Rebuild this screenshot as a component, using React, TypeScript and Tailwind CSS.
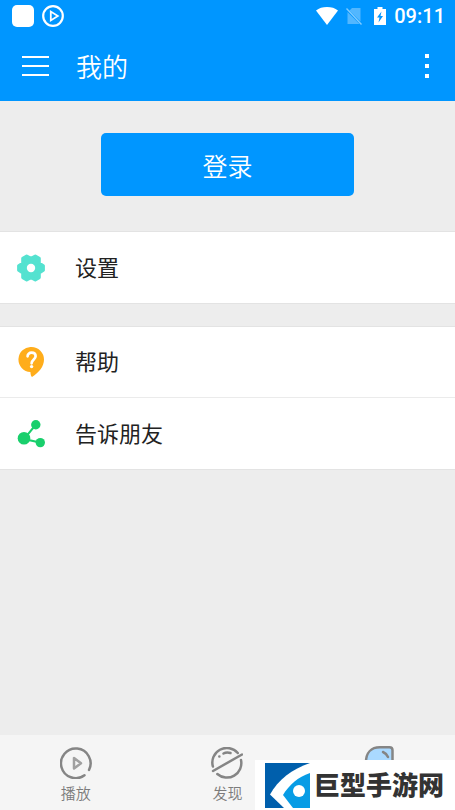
import React from 'react';

const StatusBar: React.FC = () => (
  <div className="flex h-[31px] items-center justify-between pl-3 pr-2.5">
    <div className="flex items-center gap-2">
      <span className="size-[22px] rounded-[5px] bg-white" />
      <svg className="size-[22px]" viewBox="0 0 22 22" fill="none" stroke="#fff" strokeWidth="2.2">
        <circle cx="11" cy="11" r="9.8" />
        <path d="M8.8 6.6v8.8l7-4.4z" strokeWidth="1.8" />
      </svg>
    </div>
    <div className="flex items-center">
      <svg className="h-[18px] w-[22px]" viewBox="0 0 22 18" fill="#fff">
        <path d="M11 18 0 3.4C3 1.200 6.600 0 11 0s8 1.200 11 3.400z" />
      </svg>
      <svg className="ml-2 h-[18px] w-4" viewBox="0 0 16 18">
        <path d="M6 1h8.500v13.500L3.500 3.500zM1.500 5l12 12h-12z" fill="#fff" fillOpacity=".32" />
        <path d="M.5 1.500 15.500 17.500" stroke="#fff" strokeOpacity=".5" strokeWidth="1.300" />
      </svg>
      <svg className="ml-3 h-[18px] w-3" viewBox="0 0 12 18">
        <path d="M3.500 0h5v2H12v16H0V2h3.500z" fill="#fff" />
        <path d="M7.500 4.500 3 10.500h2.500L4.500 15.500 9 9H6.500z" fill="#0096ff" />
      </svg>
      <span className="ml-2 font-['Roboto',sans-serif] text-xl leading-6 font-medium">09:11</span>
    </div>
  </div>
);

const AppBar: React.FC = () => (
  <div className="flex h-[70px] items-center pl-[22px] pr-[26px]">
    <button aria-label="菜单" className="flex w-[27px] flex-col gap-[7px]">
      <span className="h-0.5 w-full bg-white" />
      <span className="h-0.5 w-full bg-white" />
      <span className="h-0.5 w-full bg-white" />
    </button>
    <h1 className="ml-[27px] text-[26px] leading-8 font-[350]">我的</h1>
    <button aria-label="更多" className="ml-auto flex flex-col gap-1.5">
      <span className="size-1 bg-white" />
      <span className="size-1 bg-white" />
      <span className="size-1 bg-white" />
    </button>
  </div>
);

const GearIcon: React.FC = () => (
  <svg className="h-7 w-7" viewBox="-14 -14 28 28">
    <path
      d="M12.300-2.200V2.200L8.200 4.800L8.200 9.500L4.300 11.800L0 9.500L-4.300 11.800L-8.200 9.500L-8.200 4.800L-12.300 2.200V-2.200L-8.200-4.800L-8.200-9.500L-4.300-11.800L0-9.500L4.300-11.800L8.200-9.500L8.200-4.800z"
      fill="#54e2d0"
      stroke="#54e2d0"
      strokeWidth="3.200"
      strokeLinejoin="round"
    />
    <circle r="4.200" fill="#fff" />
  </svg>
);

const HelpIcon: React.FC = () => (
  <svg className="h-[30px] w-7" viewBox="0 0 28 30">
    <path d="M14.500 0a12.500 12.500 0 0 1 12.500 12.500c0 7-5 13-12 17.500-1-.6-1.400-2.700-1.600-5A12.500 12.500 0 0 1 14.500 0z" fill="#ffad1b" />
    <path d="M10.600 9.300c0-2.200 1.700-3.600 4-3.600s4 1.400 4 3.600c0 3-4 3.300-4 7" fill="none" stroke="#fff" strokeWidth="2.700" strokeLinecap="round" />
    <circle cx="14.600" cy="19.600" r="1.700" fill="#fff" />
  </svg>
);

const ShareIcon: React.FC = () => (
  <svg className="h-7 w-7" viewBox="0 0 28 28" fill="#19cf6c">
    <path d="M18.500 5 7 19 23 22.500" fill="none" stroke="#19cf6c" strokeWidth="2" />
    <circle cx="18.800" cy="4.800" r="4.700" />
    <circle cx="7" cy="18.300" r="6.300" />
    <circle cx="23.300" cy="22.600" r="4.700" />
  </svg>
);

const PlayIcon: React.FC = () => (
  <svg className="size-8" viewBox="0 0 32 32" fill="none" stroke="#858585" strokeLinecap="round" strokeLinejoin="round">
    <path d="M24.500 28.300A14.800 14.800 0 1 1 29 23" strokeWidth="2.500" />
    <path d="M14 11v10.500l7-5.250z" stroke="#a0a0a0" strokeWidth="2.500" />
  </svg>
);

const DiscoverIcon: React.FC = () => (
  <svg className="size-8" viewBox="0 0 32 32" fill="none" stroke="#858585" strokeWidth="2.500" strokeLinecap="round">
    <path d="M1.900 19.500A14.500 14.500 0 0 1 26.800 6M30 13A14.500 14.500 0 0 1 6.300 27" />
    <path d="M2 24 31 7.500" />
    <path d="M12.500 6.500c2-1.200 4.500-1.400 7-.5M8.300 9.400h.1" />
  </svg>
);

const MineIcon: React.FC = () => (
  <svg className="size-8" viewBox="0 0 32 32" fill="none" stroke="#858585" strokeWidth="2.500" strokeLinecap="round">
    <path d="M3 16C3 7 8 1.300 17 1.300h9.500q3 0 3 3V16a13.250 13.250 0 0 1-26.500 0z" fill="#aad9ff" />
    <path d="M20 6q3.500 1.500 5 5" />
  </svg>
);

const menuGroups = [
  [{ label: '设置', icon: <GearIcon /> }],
  [
    { label: '帮助', icon: <HelpIcon /> },
    { label: '告诉朋友', icon: <ShareIcon /> },
  ],
];

const SiteBadge: React.FC = () => (
  <div className="absolute right-0 bottom-0 flex h-[50px] w-[200px] items-center bg-white pl-2.5">
    <svg className="size-[45px] shrink-0" viewBox="0 0 45 45">
      <path d="M0 0h45v45H0z" fill="#005fac" />
      <path d="M45 0v45H19L5 31.500C13 17 27 6 45 0z" fill="#fff" />
      <path d="M45 10v35H28L18 32C24 22 33 14 45 10z" fill="#079ce5" />
      <circle cx="34" cy="28" r="6" fill="#fff" />
    </svg>
    <span className="ml-1 pb-0.5 text-[26px] leading-8 font-black whitespace-nowrap text-[#333]">巨型手游网</span>
  </div>
);

const App: React.FC = () => {
  return (
    <div className="relative flex min-h-screen flex-col bg-[#ededed] font-['Noto_Sans_CJK_SC',sans-serif]">
      <header className="bg-[#0096ff] text-white">
        <StatusBar />
        <AppBar />
      </header>

      <main className="flex-1">
        {/* Login */}
        <div className="flex justify-center pt-8 pb-[35px]">
          <button className="h-[63px] w-5/9 rounded-[5px] bg-[#0096ff] pt-0.5 text-[25px] font-[350] text-white">
            登录
          </button>
        </div>

        {/* Menu */}
        <div className="flex flex-col gap-[22px]">
          {menuGroups.map((group, index) => (
            <div key={index} className="divide-y divide-[#ebebeb] border-y border-[#e3e3e3] bg-white">
              {group.map((item) => (
                <button key={item.label} className="flex h-[71px] w-full items-center px-[17px] text-left">
                  {item.icon}
                  <span className="ml-[30px] pb-1 text-[22px] leading-8 text-[#222]">{item.label}</span>
                </button>
              ))}
            </div>
          ))}
        </div>
      </main>

      {/* Bottom tabs */}
      <nav className="grid h-[75px] grid-cols-3 bg-[#f5f5f5]">
        <button className="flex flex-col items-center pt-3">
          <PlayIcon />
          <span className="mt-1 text-[15px] leading-5 font-[350] text-[#7c7c7c]">播放</span>
        </button>
        <button className="flex flex-col items-center pt-3">
          <DiscoverIcon />
          <span className="mt-1 text-[15px] leading-5 font-[350] text-[#7c7c7c]">发现</span>
        </button>
        <button aria-label="我的" className="flex flex-col items-center pt-[11px]">
          <MineIcon />
        </button>
      </nav>

      <SiteBadge />
    </div>
  );
};

export default App;
